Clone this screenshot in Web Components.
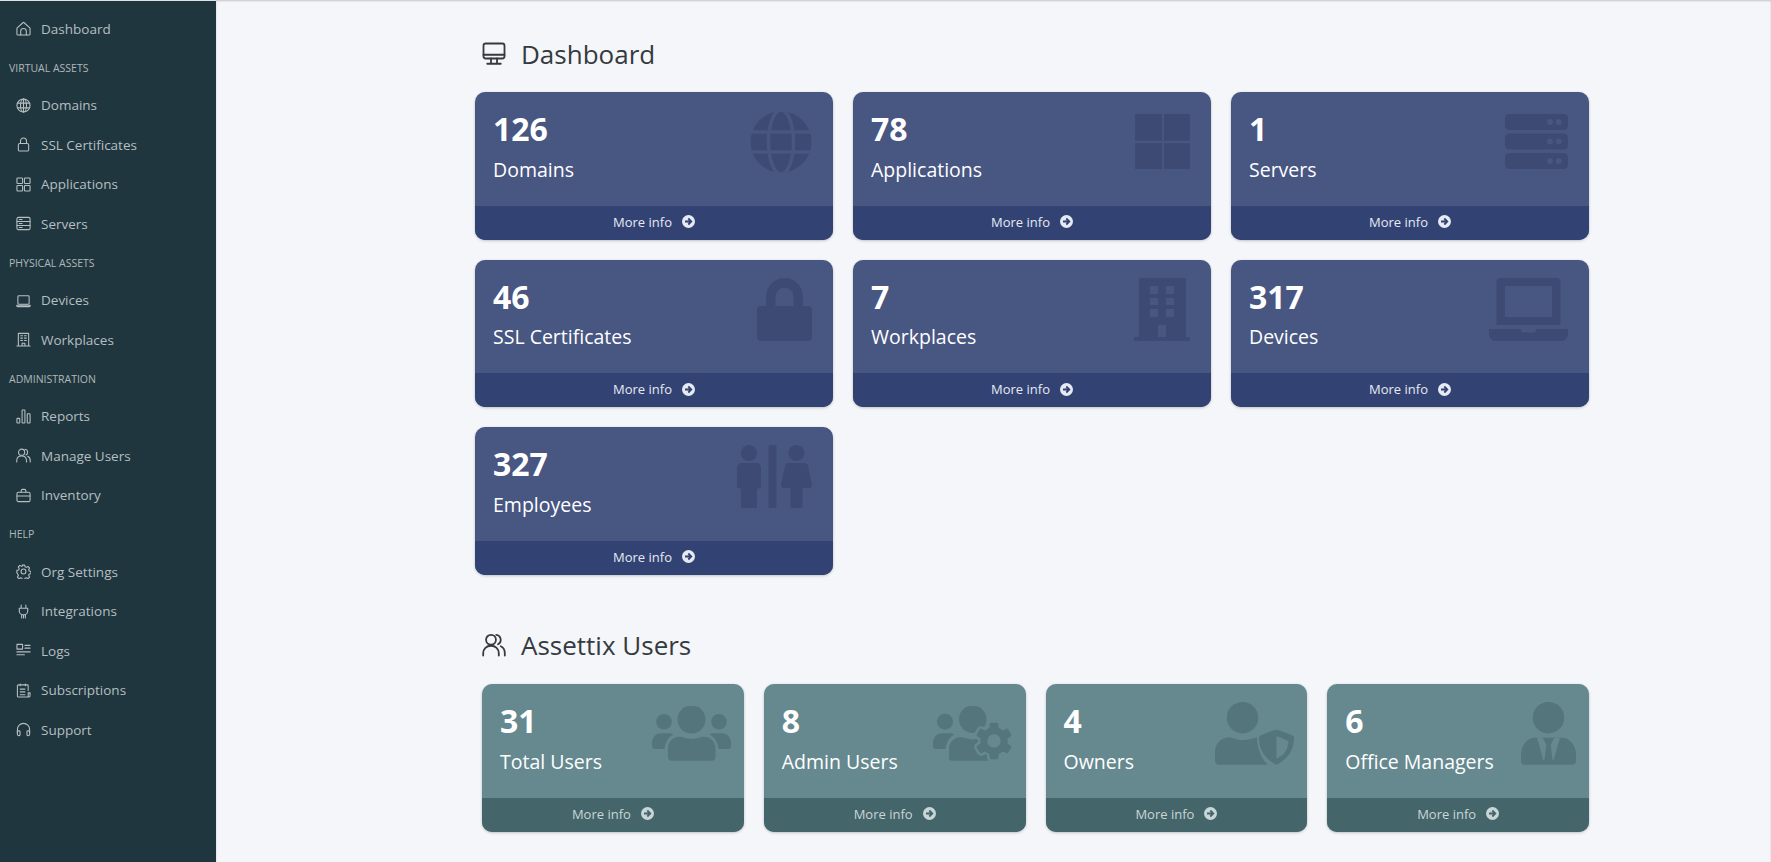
<!DOCTYPE html>
<html>
<head>
<meta charset="utf-8">
<title>Dashboard</title>
<style>
  html, body { margin: 0; height: 100%; overflow: hidden; }
  body { font-family: "Open Sans", sans-serif; background: #f4f6f9; }
</style>
</head>
<body>
<app-shell>
  <side-bar slot="side">
    <nav-item label="Dashboard" icon="house"></nav-item>
    <nav-heading>Virtual Assets</nav-heading>
    <nav-item label="Domains" icon="globe"></nav-item>
    <nav-item label="SSL Certificates" icon="lock"></nav-item>
    <nav-item label="Applications" icon="grid"></nav-item>
    <nav-item label="Servers" icon="server"></nav-item>
    <nav-heading>Physical Assets</nav-heading>
    <nav-item label="Devices" icon="laptop"></nav-item>
    <nav-item label="Workplaces" icon="building"></nav-item>
    <nav-heading>Administration</nav-heading>
    <nav-item label="Reports" icon="chart"></nav-item>
    <nav-item label="Manage Users" icon="people"></nav-item>
    <nav-item label="Inventory" icon="briefcase"></nav-item>
    <nav-heading>Help</nav-heading>
    <nav-item label="Org Settings" icon="gear"></nav-item>
    <nav-item label="Integrations" icon="plug"></nav-item>
    <nav-item label="Logs" icon="logs"></nav-item>
    <nav-item label="Subscriptions" icon="receipt"></nav-item>
    <nav-item label="Support" icon="headset"></nav-item>
  </side-bar>

  <section-head label="Dashboard" icon="display"></section-head>
  <card-grid columns="3">
    <stat-card count="126" label="Domains">
      <svg slot="icon" width="62" height="62" viewBox="0 0 62 62" fill="currentColor"><circle cx="31" cy="31" r="30.5"/><g fill="none" stroke="var(--card-top)" stroke-width="3.6"><ellipse cx="31" cy="31" rx="12.500" ry="32"/><path d="M-2 21H64M-2 41H64"/></g></svg>
    </stat-card>
    <stat-card count="78" label="Applications" offset="3">
      <svg slot="icon" width="55" height="55" viewBox="0 0 55 55" fill="currentColor"><path d="M0 0h26.800v26.800H0zM28.900 0h26.100v26.800H28.900zM0 28.900h26.800v26.100H0zM28.900 28.900h26.100v26.100H28.900z"/></svg>
    </stat-card>
    <stat-card count="1" label="Servers" offset="3">
      <svg slot="icon" width="63" height="55" viewBox="0 0 63 55" fill="currentColor"><rect width="63" height="16" rx="4.500"/><rect y="19.500" width="63" height="16" rx="4.500"/><rect y="39" width="63" height="16" rx="4.500"/><g fill="var(--card-top)"><circle cx="45" cy="8" r="3"/><circle cx="53.700" cy="8" r="3"/><circle cx="45" cy="27.500" r="3"/><circle cx="53.700" cy="27.500" r="3"/><circle cx="45" cy="47" r="3"/><circle cx="53.700" cy="47" r="3"/></g></svg>
    </stat-card>
    <stat-card count="46" label="SSL Certificates" offset="-1">
      <svg slot="icon" width="55" height="63" viewBox="0 0 55 63" fill="currentColor"><path d="M9 28V18.500a18.500 18.500 0 0 1 37 0V28h-9.500V18.500a9 9 0 0 0-18 0V28z"/><rect y="28" width="55" height="35" rx="4"/></svg>
    </stat-card>
    <stat-card count="7" label="Workplaces" offset="-1">
      <svg slot="icon" width="56" height="63" viewBox="0 0 56 63" fill="currentColor"><path fill-rule="evenodd" d="M5 2a2 2 0 0 1 2-2h43a2 2 0 0 1 2 2v57h4v4H0v-4h5zM16 8v8h8V8zM32 8v8h8V8zM16 20v7h8v-7zM32 20v7h8v-7zM16 31v8h8v-8zM32 31v8h8v-8zM24 47v12h8V47z"/></svg>
    </stat-card>
    <stat-card count="317" label="Devices" offset="-1">
      <svg slot="icon" width="79" height="63" viewBox="0 0 79 63" fill="currentColor"><path fill-rule="evenodd" d="M11.500 0h56a4 4 0 0 1 4 4v43h-64V4a4 4 0 0 1 4-4zM16 8v31h47V8z"/><path d="M0 51h31.500c0 2.500 1.500 3.500 3.500 3.500h9c2 0 3.500-1 3.500-3.500H79v5.500c0 3.500-3 6.500-6.500 6.500h-66C3 63 0 60 0 56.500z"/></svg>
    </stat-card>
    <stat-card count="327" label="Employees" offset="-1">
      <svg slot="icon" width="75" height="63" viewBox="0 0 75 63" fill="currentColor"><circle cx="12" cy="8" r="8"/><path d="M4.500 18h15a4.500 4.500 0 0 1 4.500 4.500V41a2.500 2.500 0 0 1-4 2V61a2 2 0 0 1-2 2H6a2 2 0 0 1-2-2V43a2.500 2.500 0 0 1-4-2V22.500A4.500 4.500 0 0 1 4.500 18z"/><rect x="31.500" width="8" height="63" rx="2"/><circle cx="59.500" cy="8" r="8"/><path d="M52 18h15a4 4 0 0 1 4 3l4 19a2.500 2.500 0 0 1-2.500 3H65.500v18a2 2 0 0 1-2 2H55.500a2 2 0 0 1-2-2V43H46.500A2.500 2.500 0 0 1 44 40l4-19a4 4 0 0 1 4-3z"/></svg>
    </stat-card>
  </card-grid>

  <section-head label="Assettix Users" icon="people" class="users"></section-head>
  <card-grid columns="4" class="users">
    <stat-card tone="teal" count="31" label="Total Users">
      <svg slot="icon" width="79" height="55" viewBox="0 0 79 55" fill="currentColor"><circle cx="12" cy="15.700" r="7.800"/><circle cx="67" cy="15.700" r="7.800"/><path d="M8 27.300h8c2 0 4 .5 5.500 1.200-5 2.500-8 7-9 14.500H3a3 3 0 0 1-3-3v-4.700a9 9 0 0 1 8-8z"/><path d="M71 27.300h-8c-2 0-4 .5-5.500 1.200 5 2.500 8 7 9 14.500H76a3 3 0 0 0 3-3v-4.700a9 9 0 0 0-8-8z"/><circle cx="39.500" cy="13.500" r="14"/><path d="M27 30.800c4 0 7 2.200 12.500 2.200s8.500-2.200 12.500-2.200a11.500 11.500 0 0 1 11.500 11.500V51a3.700 3.700 0 0 1-3.700 3.700H19.700A3.700 3.700 0 0 1 16 51v-8.700a11.500 11.500 0 0 1 11-11.500z"/></svg>
    </stat-card>
    <stat-card tone="teal" count="8" label="Admin Users">
      <svg slot="icon" width="80" height="56" viewBox="0 0 80 56" fill="currentColor"><circle cx="12" cy="15.700" r="8"/><path d="M8 27.300h8c2 0 4 .5 5.500 1.200-5 2.500-8 7-9 14.500H3a3 3 0 0 1-3-3v-4.700a9 9 0 0 1 8-8z"/><circle cx="39.700" cy="13.300" r="13.700"/><path d="M27.500 31.300c4 0 7 2.200 12 2.200s8-2.200 12-2.200H62v23.400H19a3 3 0 0 1-3-3v-8.900a11.500 11.500 0 0 1 11.500-11.500z"/><g transform="translate(61 35)"><g fill="var(--card-top)" stroke="var(--card-top)" stroke-width="5"><circle r="13.500"/><rect x="-4.500" y="-18.300" width="9" height="36.600" rx="2"/><rect x="-4.500" y="-18.300" width="9" height="36.600" rx="2" transform="rotate(60)"/><rect x="-4.500" y="-18.300" width="9" height="36.600" rx="2" transform="rotate(120)"/></g><rect x="-4.500" y="-18.300" width="9" height="8" rx="2"/><rect x="-4.500" y="10.300" width="9" height="8" rx="2"/><rect x="-4.500" y="-18.300" width="9" height="8" rx="2" transform="rotate(60)"/><rect x="-4.500" y="10.300" width="9" height="8" rx="2" transform="rotate(60)"/><rect x="-4.500" y="-18.300" width="9" height="8" rx="2" transform="rotate(120)"/><rect x="-4.500" y="10.300" width="9" height="8" rx="2" transform="rotate(120)"/><circle r="10.200" fill="none" stroke="currentColor" stroke-width="7"/></g></svg>
    </stat-card>
    <stat-card tone="teal" count="4" label="Owners" offset="-4.400">
      <svg slot="icon" width="79" height="64" viewBox="0 0 79 64" fill="currentColor"><circle cx="27.500" cy="15.700" r="15.700"/><path d="M14 35.400c4.500 0 7 2.600 14 2.600 5 0 8-1.400 14-2.600.5 10 3 20 11 27.300H4a4 4 0 0 1-4-4V49.400a14 14 0 0 1 14-14z"/><path d="M61.500 27.700c.7 0 1.500.3 2.300.6l13 4.700c1.300.5 2.200 1.600 2.200 3 0 11-5 20.500-17.500 26.700-12.500-6.200-17.500-15.700-17.500-26.700 0-1.400.9-2.500 2.200-3l13-4.700c.8-.3 1.600-.6 2.300-.6z"/><path d="M61.500 34.100l11.800 5c0 7.500-3 13.500-11.800 17.600z" fill="var(--card-top)"/></svg>
    </stat-card>
    <stat-card tone="teal" count="6" label="Office Managers" offset="-4.400">
      <svg slot="icon" width="55" height="64" viewBox="0 0 55 64" fill="currentColor"><circle cx="27.500" cy="15.700" r="15.700"/><path d="M14 35.700h27a14 17 0 0 1 14 17.700v5.300a4 4 0 0 1-4 4H4a4 4 0 0 1-4-4v-5.300a14 17 0 0 1 14-17.700z"/><g fill="var(--card-top)"><path d="M16 35.700h5.600l3.700 6.700-1.700 14.300-1 2.300z"/><path d="M39 35.700h-5.600l-3.700 6.700 1.700 14.300 1 2.300z"/></g></svg>
    </stat-card>
  </card-grid>
</app-shell>

<script>
const smallIcons = {
  house: `<path d="M8.400 1.600a.6.6 0 0 0-.8 0L1.300 7.300A1 1 0 0 0 1 8v6a1 1 0 0 0 1 1h12a1 1 0 0 0 1-1V8a1 1 0 0 0-.3-.7z"/><path d="M5 15v-4a3 3 0 0 1 6 0v4"/>`,
  globe: `<circle cx="8" cy="8" r="7"/><ellipse cx="8" cy="8" rx="3.200" ry="7"/><path d="M1.500 5.500h13M1.500 10.500h13M8 1v14"/>`,
  lock: `<rect x="2.500" y="7" width="11" height="8" rx="1.500"/><path d="M4.800 7V4.200a3.200 3.200 0 0 1 6.400 0V7"/>`,
  grid: `<rect x="1" y="1" width="6" height="6" rx=".8"/><rect x="9" y="1" width="6" height="6" rx=".8"/><rect x="1" y="9" width="6" height="6" rx=".8"/><rect x="9" y="9" width="6" height="6" rx=".8"/>`,
  server: `<rect x="1" y="1.500" width="14" height="13" rx="1.500"/><path d="M1 5.800h14M1 10.200h14M3.500 3.700h3M3.500 8h3M3.500 12.300h3"/>`,
  laptop: `<rect x="2" y="3" width="12" height="9" rx="1"/><path d="M.8 13h14.400v.5a1 1 0 0 1-1 1H1.800a1 1 0 0 1-1-1z"/>`,
  building: `<path d="M2.500 15V1.500h11V15M1 15h14M6.500 15v-3h3v3"/><path d="M5 4h2M9 4h2M5 6.500h2M9 6.500h2M5 9h2M9 9h2"/>`,
  chart: `<rect x="1" y="10" width="3" height="5" rx=".6"/><rect x="6.500" y="1" width="3" height="14" rx=".6"/><rect x="12" y="5" width="3" height="10" rx=".6"/>`,
  people: `<circle cx="6" cy="4.500" r="3.300"/><path d="M.8 15v-1.500c0-3 2.200-5 5.200-5s5.200 2 5.200 5V15"/><path d="M9.500 1.300a3.300 3.300 0 0 1 1.200 6.200M12.500 8.800c1.800.8 2.700 2.600 2.700 4.700V15"/>`,
  briefcase: `<rect x="1" y="4.500" width="14" height="10" rx="1.500"/><path d="M5.500 4.500V3a1.500 1.500 0 0 1 1.500-1.500h2A1.500 1.500 0 0 1 10.500 3v1.500M1 8.500h14"/>`,
  gear: `<circle cx="8" cy="8" r="2.600"/><path d="M6.800 1h2.400l.4 1.900 1.500.7 1.700-1 1.700 1.700-1 1.700.6 1.500 1.900.4v2.400l-1.900.4-.6 1.500 1 1.700-1.700 1.700-1.700-1-1.500.6-.4 1.900H6.800l-.4-1.900-1.500-.6-1.700 1-1.700-1.700 1-1.700-.6-1.500L.9 9.200V6.800l1.900-.4.600-1.500-1-1.700 1.700-1.700 1.700 1 1.500-.7z"/>`,
  plug: `<path d="M5.500 1v3.500M10.500 1v3.500M3.500 4.500h9v3a4 4 0 0 1-4 4h-1a4 4 0 0 1-4-4zM8 11.500V15M6 12v3M10 12v3"/>`,
  logs: `<rect x="1" y="1.500" width="6" height="5"/><path d="M9.500 2.500H15M9.500 5.500H15M1 9.500h14M1 12.500h8"/>`,
  receipt: `<path d="M13 8V3a1 1 0 0 0-1-1H2.500a1 1 0 0 0-1 1v11a1 1 0 0 0 1 1H13M4.500 1v2M10 1v2M4.500 6.500h5M4.500 9.500h5M4.500 12.500h5M13 15h.7a1.500 1.500 0 0 0 1.300-1.500V10.500h-2z"/>`,
  headset: `<path d="M1.500 12V8a6.500 6.500 0 0 1 13 0v4"/><path d="M1.500 9.500h1.800a1 1 0 0 1 1 1v3a1 1 0 0 1-1 1H3a1.500 1.500 0 0 1-1.500-1.500zM14.500 9.500h-1.800a1 1 0 0 0-1 1v3a1 1 0 0 0 1 1h.3a1.500 1.500 0 0 0 1.500-1.500z"/>`,
  display: `<rect x="1" y="1" width="14" height="10" rx="1.500"/><path d="M1 8.500h14M6 11v3M10 11v3M3.500 14.500h9"/>`
};

const svgIcon = (name, size, width = 1.1) =>
  `<svg width="${size}" height="${size}" viewBox="0 0 16 16" fill="none" stroke="currentColor" stroke-width="${width}" stroke-linecap="round" stroke-linejoin="round">${smallIcons[name]}</svg>`;

class AppShell extends HTMLElement {
  constructor() {
    super();
    this.attachShadow({ mode: "open" });
    this.shadowRoot.innerHTML = `
      <style>
        :host { display: grid; grid-template-columns: 216px 1fr; height: 862px; }
        main { padding: 0 182px 0 259px; box-shadow: inset 0 1px 2px rgba(0,0,0,.2); }
      </style>
      <slot name="side"></slot>
      <main><slot></slot></main>`;
  }
}

class SideBar extends HTMLElement {
  constructor() {
    super();
    this.attachShadow({ mode: "open" });
    this.shadowRoot.innerHTML = `
      <style>
        :host { display: block; background: #20363e; padding-top: 8px; border-top: 1px solid #dfe3e6; color: #c2c7d0; }
      </style>
      <slot></slot>`;
  }
}

class NavItem extends HTMLElement {
  constructor() {
    super();
    this.attachShadow({ mode: "open" });
  }
  connectedCallback() {
    this.shadowRoot.innerHTML = `
      <style>
        :host { display: flex; align-items: center; gap: 10px; height: 39.5px; padding-left: 16px; font-size: 13.5px; color: #b5bfc2; }
        svg { flex: none; }
      </style>
      ${svgIcon(this.getAttribute("icon"), 15, 1.15)}
      <span>${this.getAttribute("label")}</span>`;
  }
}

class NavHeading extends HTMLElement {
  constructor() {
    super();
    this.attachShadow({ mode: "open" });
    this.shadowRoot.innerHTML = `
      <style>
        :host { display: block; height: 37px; box-sizing: border-box; padding: 2px 0 0 9px; line-height: 35px; font-size: 10.5px; text-transform: uppercase; color: #aeb8bb; }
      </style>
      <slot></slot>`;
  }
}

class SectionHead extends HTMLElement {
  constructor() {
    super();
    this.attachShadow({ mode: "open" });
  }
  connectedCallback() {
    this.shadowRoot.innerHTML = `
      <style>
        :host { display: flex; align-items: center; gap: 15px; height: 92px; padding: 26px 0 10px 7px; font-size: 26px; color: #343a40; box-sizing: border-box; }
        :host(.users) { height: 74px; padding-top: 0; padding-bottom: 4px; margin-top: 35.5px; }
        svg { flex: none; }
      </style>
      ${svgIcon(this.getAttribute("icon"), 24, 1.2)}
      <span>${this.getAttribute("label")}</span>`;
  }
}

class CardGrid extends HTMLElement {
  constructor() {
    super();
    this.attachShadow({ mode: "open" });
  }
  connectedCallback() {
    const cols = this.getAttribute("columns");
    this.shadowRoot.innerHTML = `
      <style>
        :host { display: grid; grid-template-columns: repeat(${cols}, 1fr); column-gap: 20px; row-gap: 20px; }
        :host(.users) { margin-left: 7px; }
      </style>
      <slot></slot>`;
  }
}

class StatCard extends HTMLElement {
  constructor() {
    super();
    this.attachShadow({ mode: "open" });
  }
  connectedCallback() {
    this.shadowRoot.innerHTML = `
      <style>
        :host {
          --card-top: #485682; --card-foot: #324273; --card-mark: #3d4a73; --foot-text: #e6eaf3; --mark-top: 19px; --mark-right: 21px;
          display: block; position: relative; height: 147.5px; border-radius: 10px; overflow: hidden;
          background: var(--card-top); color: #fff;
          box-shadow: 0 0 1px rgba(0,0,0,.125), 0 1px 3px rgba(0,0,0,.2);
        }
        :host([tone="teal"]) { --card-top: #65898f; --card-foot: #44656a; --card-mark: #55757c; --foot-text: #c9d6d7; --mark-top: 22px; --mark-right: 13px; }
        .inner { height: 113.5px; box-sizing: border-box; padding: 18px 18px 0; }
        .count { font-size: 32px; font-weight: 700; line-height: 38px; }
        .label { font-size: 19.5px; line-height: 26px; margin-top: 8.5px; }
        .mark { position: absolute; top: var(--mark-top); right: var(--mark-right); color: var(--card-mark); line-height: 0; }
        footer { height: 34px; box-sizing: border-box; padding-bottom: 2px; display: flex; align-items: center; justify-content: center; gap: 10px; background: var(--card-foot); color: var(--foot-text); font-size: 13px; }
        footer svg { flex: none; }
      </style>
      <div class="inner">
        <div class="count">${this.getAttribute("count")}</div>
        <div class="label">${this.getAttribute("label")}</div>
      </div>
      <div class="mark" style="margin-top:${this.getAttribute("offset") || 0}px"><slot name="icon"></slot></div>
      <footer>
        <span>More info</span>
        <svg width="13" height="13" viewBox="0 0 13 13"><circle cx="6.500" cy="6.500" r="6.500" fill="currentColor"/><path d="M3 6.500h6M6.300 3.500l3 3-3 3" fill="none" stroke="var(--card-foot)" stroke-width="1.800"/></svg>
      </footer>`;
  }
}

customElements.define("app-shell", AppShell);
customElements.define("side-bar", SideBar);
customElements.define("nav-item", NavItem);
customElements.define("nav-heading", NavHeading);
customElements.define("section-head", SectionHead);
customElements.define("card-grid", CardGrid);
customElements.define("stat-card", StatCard);
</script>
</body>
</html>
